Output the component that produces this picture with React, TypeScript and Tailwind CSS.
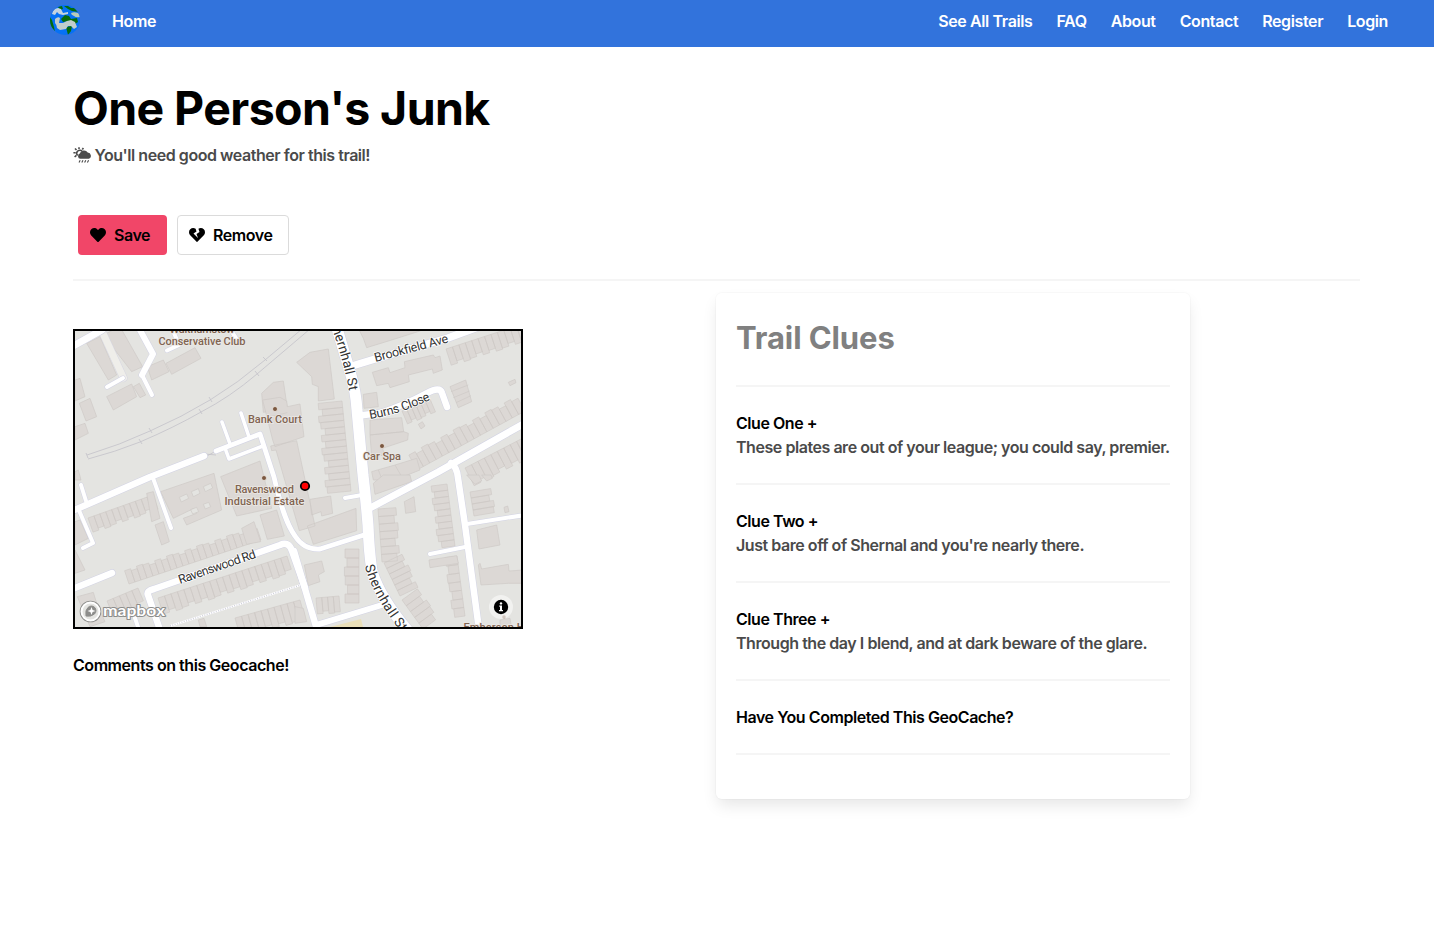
import React from "react";
import { FaHeart, FaHeartBroken } from "react-icons/fa";

const navLinks = ["See All Trails", "FAQ", "About", "Contact", "Register", "Login"];

const clues = [
  { title: "Clue One +", text: "These plates are out of your league; you could say, premier." },
  { title: "Clue Two +", text: "Just bare off of Shernal and you're nearly there." },
  { title: "Clue Three +", text: "Through the day I blend, and at dark beware of the glare." },
];

function Globe() {
  return (
    <svg className="block h-[30px] w-[30px]" viewBox="0 0 30 30">
      <defs>
        <clipPath id="globe"><circle cx="15" cy="15" r="15" /></clipPath>
      </defs>
      <g clipPath="url(#globe)">
        <rect width="30" height="30" fill="#0571f5" />
        <path d="M8 2L12 1L13 4L10 5ZM14 1H18L21 3L25 3L29 7L22 6L18 4ZM0 12L2 15L4 22L5 27L0 24Z" fill="#066b0c" />
        <path d="M2 9L3 6Q5 3 8 3L11 4L13 8L18 7V9L13 10L9 9L7 7L5 10Z" fill="#c3d3e0" />
        <path d="M21 8Q25 6 30 9V12Q26 13 24 11Q21 10 21 8Z" fill="#b7cbb9" />
        <path d="M11 14L15 10L19 11L21 14L27 13L28 17L25 19L19 16L13 17ZM16 22L22 21L21 26L18 30Z" fill="#066b0c" />
        <path d="M5 14Q8 11 10 13L9 18L13 18L17 16L21 15L25 17L27 22L24 24L21 21L18 21L16 24L10 25L7 23Q7 20 5 18Z" fill="#c0cdcc" />
      </g>
    </svg>
  );
}

function Weather() {
  return (
    <svg className="mr-[2.5px] inline-block h-[18px] w-[19px]" viewBox="0 0 19 18" fill="#4a4a4a" stroke="#4a4a4a">
      <path d="M4.600 9.500A3 3 0 1 1 9.200 5.200" fill="none" strokeWidth="1.500" />
      <path d="M6 3V1.200M3.500 4L2 2.500M9.300 3.400L10.400 2M2.700 6.800H.4M3.400 9.400L1.600 11" fill="none" strokeWidth="1.600" />
      <path d="M7.300 12.800A2.700 2.700 0 0 1 6.800 7.600A4.400 4.400 0 0 1 14.700 6.400A3.300 3.300 0 0 1 15.700 12.800Z" stroke="none" />
      <path d="M7.200 14.200L6 16.500M10 14.200L8.800 16.500M12.800 14.200L11.600 16.500M15.600 14.200L14.400 16.500" fill="none" strokeWidth="1.100" />
    </svg>
  );
}

type Row = [number, number, number, number, number, number];

// Rows of terraced houses: start x, start y, end x, end y, signed depth, number of houses.
const terraces: Row[] = [
  [342, 401, 351, 491, 24, 14],
  [417, 470, 525, 411, -17, 17],
  [465, 468, 523, 438, 20, 9],
  [446, 349, 523, 324, 17, 12],
  [402, 411, 430, 399, 14, 6],
  [88, 518, 153, 495, 15, 11],
  [129, 584, 261, 540, -14, 22],
  [158, 598, 287, 556, 17, 20],
  [107, 601, 138, 588, 17, 5],
  [235, 618, 300, 600, 20, 10],
  [378, 509, 382, 562, -18, 7],
  [384, 563, 400, 596, -20, 6],
  [402, 600, 423, 629, -19, 5],
  [447, 484, 455, 546, 16, 10],
  [457, 556, 465, 616, 12, 7],
  [470, 492, 474, 516, -21, 4],
  [359, 549, 359, 603, 14, 6],
  [316, 598, 339, 596, 16, 4],
];

function houses([x1, y1, x2, y2, depth, n]: Row) {
  const len = Math.hypot(x2 - x1, y2 - y1);
  const nx = -(y2 - y1) / len;
  const ny = (x2 - x1) / len;
  return Array.from({ length: n }, (_, i) => {
    const ax = x1 + ((x2 - x1) * i) / n;
    const ay = y1 + ((y2 - y1) * i) / n;
    const bx = x1 + ((x2 - x1) * (i + 1)) / n;
    const by = y1 + ((y2 - y1) * (i + 1)) / n;
    const d = depth * [1, 0.86, 1.04, 0.98, 0.82][i % 5];
    return `M${ax} ${ay}L${bx} ${by}L${bx + nx * d} ${by + ny * d}L${ax + nx * d} ${ay + ny * d}Z`;
  }).join("");
}

// Building footprints, drawn at three times the map scale, by area of the map.
const northWest =
  "M50 55L90 35L140 150L115 165ZM100 30L150 5L218 125L185 140ZM232 125L280 105L297 140L245 165ZM288 115L375 68L393 100L305 148ZM110 215L185 177L200 215L130 255ZM190 185L208 175L227 210L210 218ZM28 235L60 220L80 275L48 288ZM15 165L30 160L45 215L15 228ZM15 305L45 295L55 325L15 345ZM15 440L25 435L33 465H15ZM575 205L610 172L640 168L652 250L580 262Z";
const northEast =
  "M5 112L45 82L100 72L118 222L70 228V185L52 178L50 155ZM232 142L280 128L285 143L330 128L328 110L415 90L420 98L435 93L442 135L415 145L412 132L340 150L343 170L285 188L280 175L245 182ZM205 208L245 202L250 245L207 250ZM225 285L320 278L326 320L225 330ZM225 330L326 320L340 325L338 345L262 370L270 390L230 395ZM465 185L512 165L530 230L490 248ZM468 200L520 180M475 218L524 198M483 233L528 212M640 172L660 163L663 173L645 182ZM370 298L382 290L390 303L378 312ZM185 0H400L375 18L290 45L215 68L205 40ZM230 440L300 420L365 400L375 435L300 465H235ZM250 435L262 465M300 420L320 455";
const centre =
  "M188 0L240 -8L260 3L262 20L300 12L312 110L225 140L218 120ZM210 50L262 38M212 138L290 122L345 378L298 392L228 150L215 152ZM62 230L180 183L215 325L110 348ZM180 345L230 330L253 408L202 418ZM330 298L392 288L398 340L365 348L363 335L335 345ZM322 378L468 325L470 392L340 433Z";
const southWest =
  "M272 50L432 -5L455 105L350 150L340 130L380 115L372 100L310 130ZM230 55L250 50L270 130L245 140ZM255 150L280 140L298 200L275 210ZM15 140L30 135L55 190L15 210ZM15 225L45 285L15 295ZM22 365L70 352L80 385L105 440L60 455ZM385 435L402 430L410 455H390ZM515 160L552 140L572 200L530 208Z";
const southEast =
  "M235 25L265 0H345L350 20L240 58ZM328 80L357 65L362 110L332 115ZM402 255L485 242L490 265L405 278ZM545 165L605 150L615 210L552 222ZM550 270L555 265L560 282L640 268L642 288L685 285V325H640L558 330ZM28 270L80 258L88 290L70 300L75 320L40 332ZM0 395L25 400L35 440L0 445ZM515 0L540 28L560 18L552 0ZM560 0L575 18L592 10L588 0ZM627 97L638 93L642 110L630 113ZM615 435L645 430L650 460H615Z";

const roads: [string, number][] = [
  ["M73 346L102 330", 7],
  ["M123 378L107 387", 4],
  ["M140 330L153 354L142 375", 6],
  ["M142 375L152 395", 4],
  ["M167 350.5L179 345L174 333", 4],
  ["M230 329L236 338", 4],
  ["M70 512L150 477L204 456", 6.5],
  ["M216 451L260 434L274 477C282 512 288 526 295 536Q304 550 320 549L364 535", 4.8],
  ["M222 422L230 444M241 413L249 437M225 448L229 459L263 446", 3.6],
  ["M336 325L351 375Q356 393 357 410L363 475Q366 500 368 525Q369 552 372 571Q380 598 409 632", 11],
  ["M352 366L375 359L448 338L478 327", 7.5],
  ["M360 415.5L380 413Q405 405 427 393Q440 386 442 393L447 407", 6.5],
  ["M370 508L438 472L525 423", 7],
  ["M451 463Q457 467 458 478L465 525L478 622", 6.5],
  ["M467 524L525 515M430 554L465 547M345 498L362 495", 4],
  ["M316 625L382 605", 6],
  ["M294 551L317 630", 6.5],
  ["M160 630L148 595Q146 591 154 589L280 545Q289 541 292 551L305 588", 6.5],
  ["M70 590L112 573", 6.5],
  ["M153 478L171 528M81 485L86 501M78 508L93 543L83 548M135 618L139 630", 4],
];

function TrailMap() {
  return (
    <svg className="block h-full w-full font-normal tracking-normal" viewBox="75 331 446 296" fontFamily="Roboto, 'Liberation Sans', sans-serif">
      <rect x="75" y="331" width="446" height="296" fill="#e4e4e1" />
      <g fill="#dcd8d5" stroke="#cdc8c5" strokeWidth=".6">
        <path d={terraces.map(houses).join("")} />
        <g strokeWidth="2">
          <path transform="translate(70 325) scale(.33333)" d={northWest} />
          <path transform="translate(295 325) scale(.33333)" d={northEast} />
          <path transform="translate(70 475) scale(.33333)" d={southWest} />
          <path transform="translate(295 475) scale(.33333)" d={southEast} />
          <path transform="translate(200 400) scale(.33333)" d={centre} />
          <path
            transform="translate(70 475) scale(.33333)"
            fill="#e4e4e1"
            d="M328 67L350 57L356 70L334 81ZM364 50L385 41L390 55L370 65ZM400 35L422 25L428 39L406 50ZM362 104L380 97L386 110L368 117ZM400 88L416 82L422 95L406 102Z"
          />
        </g>
      </g>
      <path d="M330 627L361 619L363 627Z" fill="#eadfb8" />
      <g fill="none" stroke="#c3c2c9" strokeWidth=".8">
        <path d="M87 455Q120 445 150 431Q182 417 210 400Q238 383 265 360L302 329M88 459Q115 452 140 442Q175 427 201 412Q230 397 257 374L310 329" />
        <path d="M86 453L88 458M149 428L152 433M139 439L142 444M209 397L212 402M199 409L202 414M263 357L267 361M255 371L259 376M205 457L216 451M205 454L216 455" />
      </g>
      <path d="M170 626L304 584" fill="none" stroke="#fff" strokeWidth="2" />
      <path d="M170 626L304 584" fill="none" stroke="#cfcfdc" strokeWidth="1.4" strokeDasharray="1 1.4" />
      <g fill="none" strokeLinecap="round" strokeLinejoin="round">
        <path d="M101 329L123.5 378" stroke="#d7d7e2" strokeWidth="8" />
        <path d="M101 329L123.5 378" stroke="#efeeea" strokeWidth="7" />
        {roads.map(([d, w]) => <path key={d} d={d} stroke="#d2d3e4" strokeWidth={w + 1} />)}
        {roads.map(([d, w]) => <path key={d} d={d} stroke="#fff" strokeWidth={w} />)}
      </g>
      <defs>
        <path id="shernhall-north" d="M329 321Q344 360 350 396" />
        <path id="shernhall-south" d="M365 566Q372 596 405 637" />
        <path id="burns" d="M370 419Q402 414 436 397" />
      </defs>
      <g fill="#333" stroke="#fff" strokeWidth="1.5" paintOrder="stroke" fontSize="12.500" strokeLinejoin="round">
        <text transform="translate(375.500 362) rotate(-15)" textLength="76">Brookfield Ave</text>
        <text transform="translate(180 584) rotate(-19)" textLength="81">Ravenswood Rd</text>
        <text><textPath href="#burns" textLength="64">Burns Close</textPath></text>
        <text fontSize="13.500"><textPath href="#shernhall-north" textLength="73">Shernhall St</textPath></text>
        <text fontSize="13.500"><textPath href="#shernhall-south" textLength="76">Shernhall St</textPath></text>
      </g>
      <g fill="#806451" stroke="#ebe8e5" strokeWidth="1.6" paintOrder="stroke" fontSize="11" fontWeight="500" textAnchor="middle">
        <text x="202" y="333" textLength="65">Walthamstow</text>
        <text x="202" y="345" textLength="87">Conservative Club</text>
        <text x="275" y="423" textLength="54">Bank Court</text>
        <text x="382" y="460" textLength="38">Car Spa</text>
        <text x="264.500" y="492.500" textLength="59">Ravenswood</text>
        <text x="264.500" y="504.500" textLength="80">Industrial Estate</text>
        <text x="494" y="631" textLength="61">Emberson H</text>
      </g>
      <g fill="#7b573f" stroke="#f1eeea" strokeWidth=".8">
        <circle cx="275" cy="409" r="2.5" />
        <circle cx="382" cy="446" r="2.5" />
        <circle cx="264" cy="478" r="2.500" />
        <circle cx="504" cy="617" r="2.2" opacity=".6" />
      </g>
      <circle cx="305" cy="486" r="4.2" fill="#f00" stroke="#000" strokeWidth="1.8" />
      <circle cx="90.500" cy="611.500" r="9" fill="none" stroke="#8d8d8b" strokeWidth="3.600" />
      <circle cx="90.500" cy="611.500" r="9" fill="#e4e4e1" stroke="#fff" strokeWidth="2" />
      <path d="M86 616Q85 610 88 607.5A4.600 4.600 0 1 1 94.500 614Q91 617 86 616Z" fill="#8d8d8b" stroke="#8d8d8b" />
      <path d="M91.500 607L92.600 609.900L95.500 611L92.600 612.100L91.500 615L90.400 612.100L87.500 611L90.400 609.900Z" fill="#fff" />
      <text x="103" y="616" textLength="62" lengthAdjust="spacingAndGlyphs" fontFamily="Lato, sans-serif" fontWeight="700" fontSize="15.500" fill="#fff" stroke="#8d8d8b" strokeWidth="2" paintOrder="stroke" strokeLinejoin="round">mapbox</text>
      <circle cx="501" cy="607" r="12" fill="#fff" fillOpacity=".5" />
      <circle cx="501" cy="607" r="7.200" fill="#000" />
      <path d="M499.300 605.500H502V610H503V611.300H499V610H500V606.800H499.300Z" fill="#fff" />
      <circle cx="501" cy="603.400" r="1.200" fill="#fff" />
    </svg>
  );
}

export default function App() {
  return (
    <div className="min-h-[926px] bg-white font-['Inter',sans-serif] text-[16px] leading-6 font-semibold tracking-[-0.45px] text-[#4a4a4a]">
      <nav className="flex h-[47px] items-start justify-between bg-[#3273dc] pr-[46px] pl-[50px] tracking-[-0.38px] text-white">
        <div className="flex items-start">
          <div className="pt-[5px]"><Globe /></div>
          <a className="ml-8 pt-[9px]">Home</a>
        </div>
        <div className="flex gap-6 pt-[9px]">
          {navLinks.map((link) => <a key={link}>{link}</a>)}
        </div>
      </nav>

      <main className="mr-[74px] ml-[73px]">
        <header className="h-[232px] pt-[34px]">
          <h1 className="text-[46.5px] leading-[54px] font-bold tracking-[-0.6px] text-black">One Person's Junk</h1>
          <p className="mt-2 flex items-center"><Weather />You'll need good weather for this trail!</p>
          <div className="mt-12 ml-[5px] flex gap-[10px] text-black">
            <button className="flex h-10 w-[89px] items-center rounded-[4px] bg-[#f14668] pl-3">
              <FaHeart className="mr-2 h-4 w-4" />Save
            </button>
            <button className="flex h-10 w-[112px] items-center rounded-[4px] border border-[#dbdbdb] bg-white pl-[11px]">
              <FaHeartBroken className="mr-2 h-4 w-4" />Remove
            </button>
          </div>
        </header>
        <hr className="h-[2px] border-0 bg-[#f5f5f5]" />

        <div className="grid grid-cols-[643px_1fr] items-start">
          <section className="pt-12">
            <div className="h-[300px] w-[450px] overflow-hidden border-2 border-black"><TrailMap /></div>
            <p className="mt-6 text-black">Comments on this Geocache!</p>
          </section>
          <section className="mt-3 h-[506px] w-[474px] rounded-[6px] px-5 pt-6 shadow-[0_8px_16px_-2px_rgba(10,10,10,0.1),0_0_0_1px_rgba(10,10,10,0.02)]">
            <h2 className="mb-6 pb-[3px] text-[31px] leading-[41px] font-bold tracking-[-0.1px] text-[#808080]">Trail Clues</h2>
            {clues.map((clue) => (
              <div key={clue.title} className="mb-6 border-t-2 border-[#f5f5f5] pt-6">
                <h3 className="text-black">{clue.title}</h3>
                <p className="whitespace-nowrap">{clue.text}</p>
              </div>
            ))}
            <div className="border-y-2 border-[#f5f5f5] py-6 text-black">Have You Completed This GeoCache?</div>
          </section>
        </div>
      </main>
    </div>
  );
}
